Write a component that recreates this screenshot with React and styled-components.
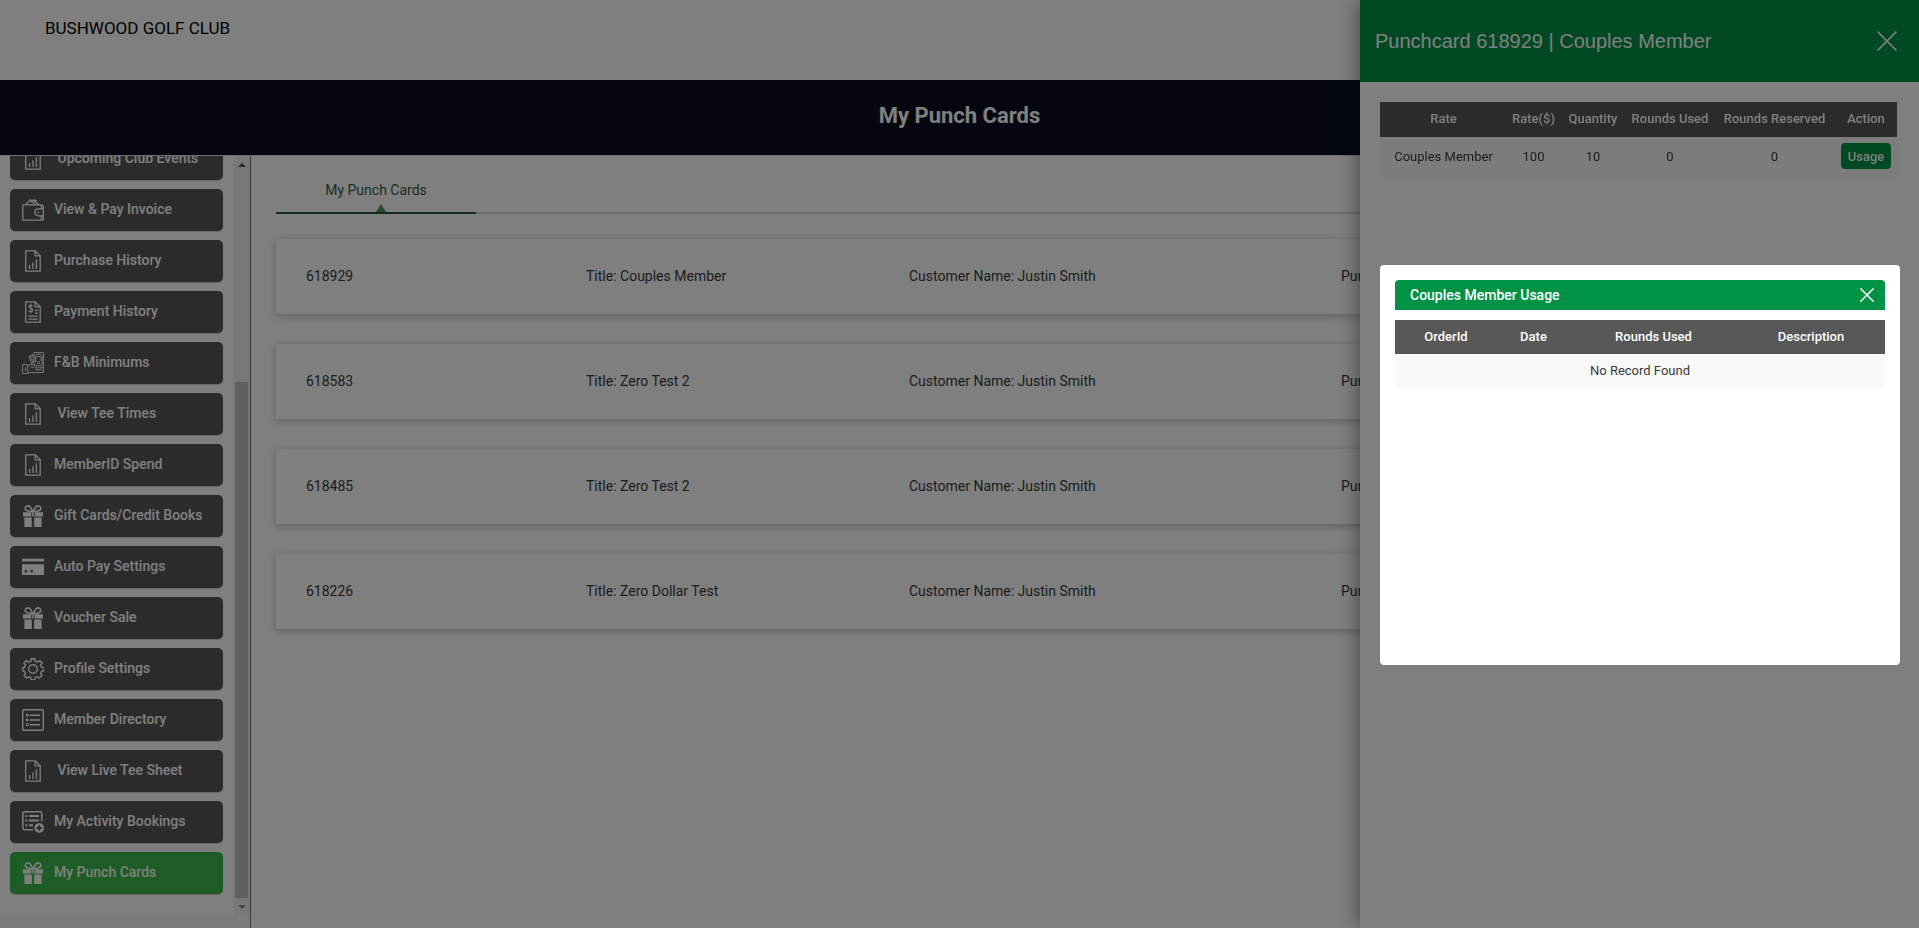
import React from 'react'
import styled, { createGlobalStyle } from 'styled-components'

const GlobalStyle = createGlobalStyle`
    * {
        box-sizing: border-box;
    }
    body {
        margin: 0;
        font-family: Roboto, sans-serif;
        font-size: 14px;
        color: #3a3a3a;
        background-color: #ffffff;
    }
`
const Page = styled.div`
    height: 100vh;
    display: flex;
    flex-direction: column;
    overflow: hidden;
`
const Header = styled.header`
    flex: none;
    height: 80px;
    padding: 18px 45px;
    font-size: 17px;
    line-height: 20px;
    color: #000000;
`
const TitleBar = styled.div`
    flex: none;
    height: 75px;
    display: flex;
    justify-content: center;
    padding-top: 21px;
    background-color: #080f1f;
    h1 {
        margin: 0;
        font-size: 22px;
        font-weight: bold;
        line-height: 30px;
        color: #ffffff;
    }
`
const Body = styled.div`
    flex: 1;
    min-height: 0;
    display: flex;
    border-top: 1px solid #d8d4dc;
`
const Sidebar = styled.aside`
    flex: none;
    width: 251px;
    display: flex;
    padding-bottom: 13px;
    border-right: 1px solid #7a7a7a;
    background-color: #f7f7f7;
`
const Menu = styled.nav`
    flex: 1;
    display: flex;
    flex-direction: column;
    justify-content: flex-end;
    gap: 9px;
    padding: 0 10px 21px;
    overflow: hidden;
    background-color: #ffffff;
`
const MenuLink = styled.a`
    flex: none;
    height: 42px;
    display: flex;
    align-items: center;
    gap: 10px;
    padding-left: 12px;
    border-radius: 5px;
    font-weight: 500;
    white-space: pre;
    text-decoration: none;
    color: #ffffff;
    background-color: ${props => (props.$active ? '#3ab848' : '#575757')};
    box-shadow: 0 1px 1px rgba(0, 0, 0, 0.2);
    svg {
        flex: none;
    }
    span {
        padding-bottom: 2px;
    }
`
const ScrollTrack = styled.div`
    flex: none;
    width: 17px;
    display: flex;
    flex-direction: column;
    align-items: center;
    background-color: #f1f1f1;
`
const ScrollArrow = styled.div`
    flex: none;
    height: 17px;
    display: flex;
    align-items: center;
    color: ${props => props.color};
`
const ScrollThumb = styled.div`
    width: 13px;
    height: 68%;
    margin-top: auto;
    background-color: #c1c1c1;
`
const Content = styled.main`
    flex: 1;
    min-width: 0;
    padding: 17px 25px;
`
const Tabs = styled.div`
    display: flex;
    margin-bottom: 25px;
    box-shadow: inset 0 -2px 0 #d8d8d8;
`
const Tab = styled.button`
    position: relative;
    width: 200px;
    height: 41px;
    padding: 0 0 6px;
    border: 0;
    border-bottom: 2px solid #24593c;
    background: none;
    font: inherit;
    color: #2f6045;
    &::after {
        content: '';
        position: absolute;
        bottom: 0;
        left: 50%;
        border: solid transparent;
        border-width: 0 5px 8px;
        border-bottom-color: #45984c;
    }
`
const CardList = styled.div`
    display: flex;
    flex-direction: column;
    gap: 30px;
`
const Card = styled.article`
    height: 75px;
    display: grid;
    grid-template-columns: 280fr 323fr 432fr 523fr;
    align-items: center;
    padding: 0 30px 2px;
    background-color: #ffffff;
    box-shadow: 0 2px 8px rgba(0, 0, 0, 0.25);
`
const Drawer = styled.section`
    position: fixed;
    top: 0;
    right: 0;
    bottom: 0;
    width: 559px;
    background-color: #ffffff;
    box-shadow: 0 0 20px rgba(0, 0, 0, 0.5);
`
const DrawerHeader = styled.div`
    height: 82px;
    display: flex;
    align-items: center;
    justify-content: space-between;
    padding: 0 22px 0 15px;
    background-color: #009245;
    h2 {
        margin: 0;
        font-family: 'Liberation Sans', Arial, sans-serif;
        font-size: 20px;
        font-weight: normal;
        color: #ffffff;
    }
`
const DrawerBody = styled.div`
    padding: 20px 22px 20px 20px;
`
const CloseButton = styled.button`
    display: flex;
    padding: 0;
    border: 0;
    background: none;
    color: #ffffff;
`
const Table = styled.table`
    width: 100%;
    table-layout: fixed;
    border-collapse: collapse;
    font-size: 13px;
    text-align: center;
    th {
        height: ${props => (props.$dense ? '34px' : '35px')};
        padding: 0 0 2px;
        font-weight: 500;
        white-space: nowrap;
        color: #ffffff;
        background-color: #575757;
    }
    td {
        height: ${props => (props.$dense ? '35px' : '40px')};
        padding: 0 0 2px;
        background-color: #f9f9f9;
    }
`
const UsageButton = styled.button`
    width: 50px;
    height: 26px;
    padding: 0;
    border: 0;
    border-radius: 4px;
    font: inherit;
    font-weight: 500;
    color: #ffffff;
    background-color: #009245;
`
const Overlay = styled.div`
    position: fixed;
    inset: 0;
    display: flex;
    align-items: center;
    justify-content: flex-end;
    padding: 2px 19px 0 0;
    background-color: rgba(0, 0, 0, 0.5);
`
const Modal = styled.div`
    width: 520px;
    min-height: 400px;
    padding: 15px;
    border-radius: 4px;
    background-color: #ffffff;
`
const ModalHeader = styled.div`
    height: 30px;
    display: flex;
    align-items: center;
    justify-content: space-between;
    margin-bottom: 10px;
    padding: 0 11px 0 15px;
    border-radius: 4px 4px 0 0;
    background-color: #009245;
    h3 {
        margin: 0;
        font-size: 14px;
        font-weight: 500;
        color: #ffffff;
    }
`

const icons = {
    report: (
        <g fill="none" stroke="currentColor" strokeWidth="1.3">
            <path d="M3.7.8h9.6l4.9 5v15.4H3.7zM13.2.8v5.1h5" />
            <path d="M7.6 15v4M11 12.2V19M14.4 9.2V19" />
        </g>
    ),
    payment: (
        <g fill="none" stroke="currentColor" strokeWidth="1.3">
            <path d="M3.7.8h9.6l4.9 5v15.4H3.7zM13.2.8v5.1h5" />
            <path d="M10.6 4.8c-.8-.9-3.6-.9-3.6.8 0 2 3.8 1.2 3.8 3.4 0 1.8-3 1.9-4 .8M8.9 2.6v10" strokeWidth="1.1" />
            <path d="M13 9.3h3M13 12.2h3M6.3 15.2h9.6M6.3 18.2h9.6" />
        </g>
    ),
    wallet: (
        <g fill="none" stroke="currentColor" strokeWidth="1.3" strokeLinejoin="round">
            <path d="M.8 5.8h18.6v4.1M.8 5.8v15.4h20.5v-4.4M19.4 16.8v4.2" />
            <path d="M3.6 5.6 8.4.8l4.6 4.8M8.4 3.2 11 1l5.6 4.6M12 .8l2.8 1" />
            <path d="M21.3 9.9h-5a3.4 3.4 0 0 0 0 6.9h5zM19.4 5.8l1.9 1.5v2.6" />
            <path d="M15.6 13.3h1.4" strokeWidth="1.8" />
        </g>
    ),
    cash: (
        <g fill="none" stroke="currentColor" strokeWidth=".9">
            <path d="M.6 12.6h5.2v8.9H.6zM3.4 15.5v3.6M5.8 14l2.6-1.4h4.4M5.8 20.6h15.7V.6H12v4.3" />
            <path d="m7 4.8 4.6-2.2M7 4.8l2.8 7.4M8 3l3.4 8.8M10.8 2.6l1.4 9" />
            <path d="M20 3.8c-1.4 0-1.8-1-1.8-1.8h-3c0 1-1 1.8-1.8 1.8v6.4M20 3.8V13M14.2 9.4a2.8 3.2 0 1 1 4.6-.4" />
            <circle cx="16.6" cy="10.6" r="1.2" />
            <path d="M12 13.8h8.5M13 15.8h8M13 17.8h7M8.6 15.2h3.6" />
        </g>
    ),
    gift: (
        <g fill="currentColor">
            <path d="M1 7.2h8.3v4.3H1zM12.7 7.2H21v4.3h-8.3zM10.2 7.2h1.6v4.3h-1.6zM2.4 12.6h7.4V22H2.4zM12.2 12.6h7.4V22h-7.4z" />
            <path
                d="M10.6 6.6C8.8 6.6 3 6.2 3.2 3.4 3.4.6 6.6.2 8 1.8c1.4 1.5 2.2 3.6 2.6 4.8zM11.4 6.6c1.8 0 7.6-.4 7.4-3.2-.2-2.8-3.4-3.2-4.8-1.6-1.4 1.5-2.2 3.6-2.6 4.8z"
                fill="none"
                stroke="currentColor"
                strokeWidth="1.6"
            />
        </g>
    ),
    card: (
        <path
            fill="currentColor"
            fillRule="evenodd"
            d="M0 2.7h22v2.8H0zM0 8.3h22V19H0zM2.8 14v2.4h2.4V14zM8.4 14v2.4h2.4V14z"
        />
    ),
    gear: (
        <g fill="none" stroke="currentColor" strokeWidth="1.4" strokeLinejoin="round">
            <path d="M9.2.7h3.6l.5 2.6 2 .9 2.3-1.6 2.5 2.5-1.5 2.2.8 2 2.6.5v3l-2.6.6-.8 2 1.5 2.2-2.5 2.5-2.3-1.5-2 .8-.5 2.6H9.2l-.5-2.6-2-.8-2.2 1.5L2 17.6l1.5-2.2-.8-2-2-.6v-3l2-.5.8-2L2 5.1l2.5-2.5 2.2 1.6 2-.9z" />
            <circle cx="11" cy="11" r="4.3" />
        </g>
    ),
    directory: (
        <g fill="none" stroke="currentColor" strokeWidth="1.4">
            <rect x=".7" y=".7" width="20.6" height="20.6" rx="1" />
            <path d="M8 6.3h10M8 11h10M8 15.7h10" strokeWidth="1.5" />
            <path d="M4 6.3h2.6M4 11h2.6" strokeWidth="2.4" />
            <path d="M4.4 14.6h2v2h-2z" strokeWidth=".8" />
        </g>
    ),
    bookings: (
        <g fill="none" stroke="currentColor" strokeWidth="1.5">
            <path d="M11 18.7H2.8a2 2 0 0 1-2-2V2.8a2 2 0 0 1 2-2h14.9a2 2 0 0 1 2 2v7.8" />
            <path d="M7 5h10M7 9.6h10M7 14.2h4" strokeWidth="2" />
            <path d="M3.4 5h2M3.4 9.6h2M3.4 14.2h2" strokeWidth="2" />
            <circle cx="17.2" cy="17" r="4.8" fill="currentColor" stroke="none" />
            <path d="M17.2 14.2v5.6M14.4 17H20" stroke="#575757" strokeWidth="1.8" />
        </g>
    ),
}

const menu = [
    { label: ' Upcoming Club Events', icon: 'report' },
    { label: 'View & Pay Invoice', icon: 'wallet' },
    { label: 'Purchase History', icon: 'report' },
    { label: 'Payment History', icon: 'payment' },
    { label: 'F&B Minimums', icon: 'cash' },
    { label: ' View Tee Times', icon: 'report' },
    { label: 'MemberID Spend', icon: 'report' },
    { label: 'Gift Cards/Credit Books', icon: 'gift' },
    { label: 'Auto Pay Settings', icon: 'card' },
    { label: 'Voucher Sale', icon: 'gift' },
    { label: 'Profile Settings', icon: 'gear' },
    { label: 'Member Directory', icon: 'directory' },
    { label: ' View Live Tee Sheet', icon: 'report' },
    { label: 'My Activity Bookings', icon: 'bookings' },
    { label: 'My Punch Cards', icon: 'gift', active: true },
]

const cards = [
    { id: 618929, title: 'Couples Member' },
    { id: 618583, title: 'Zero Test 2' },
    { id: 618485, title: 'Zero Test 2' },
    { id: 618226, title: 'Zero Dollar Test' },
]

function Close({ size }) {
    return (
        <CloseButton aria-label="Close">
            <svg width={size} height={size} viewBox="0 0 20 20" stroke="currentColor" strokeWidth={30 / size}>
                <path d="M.6.6l18.8 18.8M19.4.6.6 19.4" />
            </svg>
        </CloseButton>
    )
}

function Arrow({ down }) {
    return (
        <svg width="8" height="4" fill="currentColor">
            <path d={down ? 'M0 0h8L4 4z' : 'M0 4h8L4 0z'} />
        </svg>
    )
}

function Columns({ widths }) {
    return (
        <colgroup>
            {widths.map((width, i) => <col key={i} width={width} />)}
        </colgroup>
    )
}

export default function App() {
    return (
        <>
            <GlobalStyle />
            <Page>
                <Header>BUSHWOOD GOLF CLUB</Header>
                <TitleBar>
                    <h1>My Punch Cards</h1>
                </TitleBar>
                <Body>
                    <Sidebar>
                        <Menu>
                            {menu.map(item => (
                                <MenuLink key={item.label} href="#" $active={item.active}>
                                    <svg width="22" height="22" viewBox="0 0 22 22">{icons[item.icon]}</svg>
                                    <span>{item.label}</span>
                                </MenuLink>
                            ))}
                        </Menu>
                        <ScrollTrack>
                            <ScrollArrow color="#505050"><Arrow /></ScrollArrow>
                            <ScrollThumb />
                            <ScrollArrow color="#909090"><Arrow down /></ScrollArrow>
                        </ScrollTrack>
                    </Sidebar>
                    <Content>
                        <Tabs>
                            <Tab>My Punch Cards</Tab>
                        </Tabs>
                        <CardList>
                            {cards.map(card => (
                                <Card key={card.id}>
                                    <span>{card.id}</span>
                                    <span>Title: {card.title}</span>
                                    <span>Customer Name: Justin Smith</span>
                                    <span>Purchase Date:</span>
                                </Card>
                            ))}
                        </CardList>
                    </Content>
                </Body>
            </Page>
            <Drawer>
                <DrawerHeader>
                    <h2>Punchcard 618929 | Couples Member</h2>
                    <Close size={20} />
                </DrawerHeader>
                <DrawerBody>
                    <Table>
                        <Columns widths={[127, 53, 66, 88, 121, 62]} />
                        <thead>
                            <tr>
                                <th>Rate</th>
                                <th>Rate($)</th>
                                <th>Quantity</th>
                                <th>Rounds Used</th>
                                <th>Rounds Reserved</th>
                                <th>Action</th>
                            </tr>
                        </thead>
                        <tbody>
                            <tr>
                                <td>Couples Member</td>
                                <td>100</td>
                                <td>10</td>
                                <td>0</td>
                                <td>0</td>
                                <td><UsageButton>Usage</UsageButton></td>
                            </tr>
                        </tbody>
                    </Table>
                </DrawerBody>
            </Drawer>
            <Overlay>
                <Modal role="dialog" aria-label="Couples Member Usage">
                    <ModalHeader>
                        <h3>Couples Member Usage</h3>
                        <Close size={14} />
                    </ModalHeader>
                    <Table $dense>
                        <Columns widths={[102, 73, 167, 148]} />
                        <thead>
                            <tr>
                                <th>OrderId</th>
                                <th>Date</th>
                                <th>Rounds Used</th>
                                <th>Description</th>
                            </tr>
                        </thead>
                        <tbody>
                            <tr>
                                <td colSpan="4">No Record Found</td>
                            </tr>
                        </tbody>
                    </Table>
                </Modal>
            </Overlay>
        </>
    )
}
